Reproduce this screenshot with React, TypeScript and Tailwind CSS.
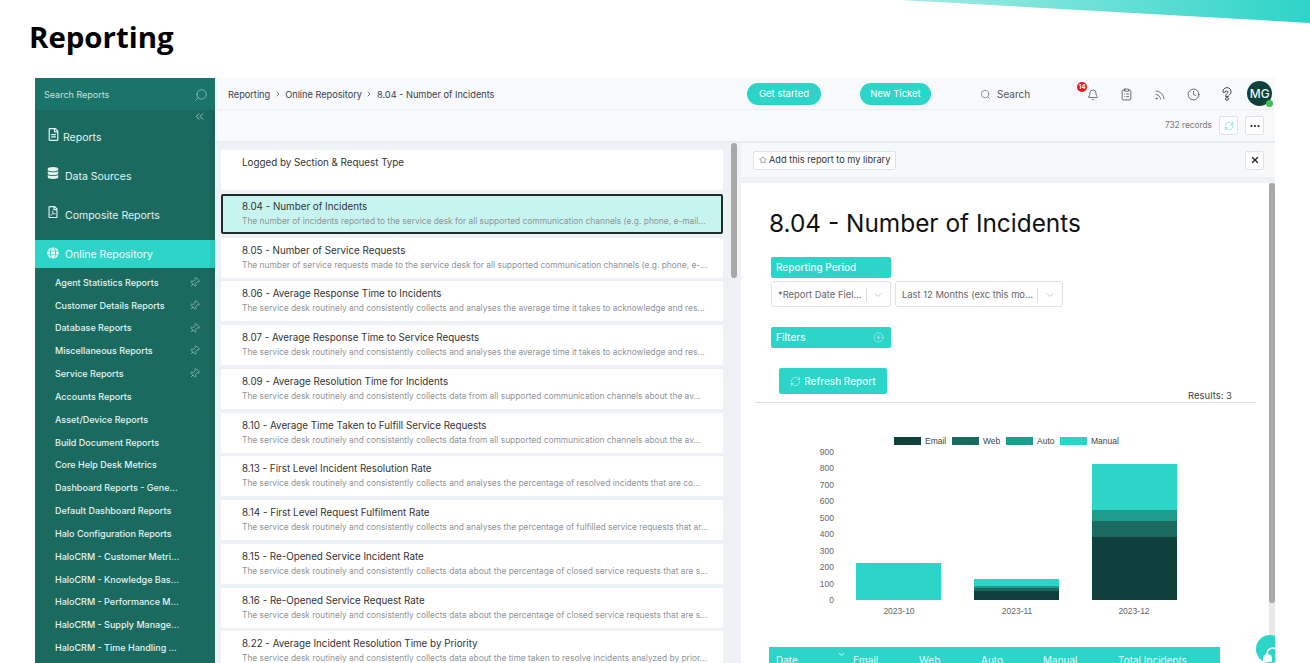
import React from "react";
import { Search, ChevronsLeft, ChevronRight, Pin, Bell, ClipboardList, Rss, Clock, RefreshCw, Ellipsis, X, ChevronDown, CirclePlus, Star } from "lucide-react";
import { FaDatabase, FaGlobe, FaRegFileAlt, FaRegFilePdf } from "react-icons/fa";

const sub: [string, boolean][] = [
  ["Agent Statistics Reports", true],
  ["Customer Details Reports", true],
  ["Database Reports", true],
  ["Miscellaneous Reports", true],
  ["Service Reports", true],
  ["Accounts Reports", false],
  ["Asset/Device Reports", false],
  ["Build Document Reports", false],
  ["Core Help Desk Metrics", false],
  ["Dashboard Reports - Gene...", false],
  ["Default Dashboard Reports", false],
  ["Halo Configuration Reports", false],
  ["HaloCRM - Customer Metri...", false],
  ["HaloCRM - Knowledge Bas...", false],
  ["HaloCRM - Performance M...", false],
  ["HaloCRM - Supply Manage...", false],
  ["HaloCRM - Time Handling ...", false],
];

const rows: [string, string][] = [
  ["8.04 - Number of Incidents", "The number of incidents reported to the service desk for all supported communication channels (e.g. phone, e-mail..."],
  ["8.05 - Number of Service Requests", "The number of service requests made to the service desk for all supported communication channels (e.g. phone, e-..."],
  ["8.06 - Average Response Time to Incidents", "The service desk routinely and consistently collects and analyses the average time it takes to acknowledge and res..."],
  ["8.07 - Average Response Time to Service Requests", "The service desk routinely and consistently collects and analyses the average time it takes to acknowledge and res..."],
  ["8.09 - Average Resolution Time for Incidents", "The service desk routinely and consistently collects data from all supported communication channels about the av..."],
  ["8.10 - Average Time Taken to Fulfill Service Requests", "The service desk routinely and consistently collects data from all supported communication channels about the av..."],
  ["8.13 - First Level Incident Resolution Rate", "The service desk routinely and consistently collects and analyses the percentage of resolved incidents that are co..."],
  ["8.14 - First Level Request Fulfilment Rate", "The service desk routinely and consistently collects and analyses the percentage of fulfilled service requests that ar..."],
  ["8.15 - Re-Opened Service Incident Rate", "The service desk routinely and consistently collects data about the percentage of closed service requests that are s..."],
  ["8.16 - Re-Opened Service Request Rate", "The service desk routinely and consistently collects data about the percentage of closed service requests that are s..."],
  ["8.22 - Average Incident Resolution Time by Priority", "The service desk routinely and consistently collects data about the time taken to resolve incidents analyzed by prior..."],
];

function HelpIcon() {
  return (
    <svg width="10" height="14" viewBox="0 0 11 15" fill="none" stroke="#333" strokeWidth="1">
      <path d="M1 5a4.5 4.5 0 1 1 7 3.7c-.7.5-1 .8-1 1.5h-3c0-1.6.5-2.4 1.6-3.2.7-.5.9-.9.9-1.5a1.4 1.4 0 0 0-2.8 0H1z" />
      <rect x="4" y="11.6" width="3" height="2.6" rx=".6" />
    </svg>
  );
}

function ChatIcon() {
  return (
    <svg width="19" height="16" viewBox="0 0 19 16" fill="none">
      <path d="M5 8a6 6 0 0 1 12 0" stroke="#fff" strokeWidth="1.6" />
      <path d="M1 12.5a4.5 4.5 0 0 1 9 0V16H1z" fill="#fff" />
    </svg>
  );
}

function Chart() {
  const c = { e: "#0f403c", w: "#1a6a60", a: "#209c8f", m: "#2dd4c8" };
  const ox = 769, oy = 432;
  const legend: [number, string, string, number][] = [
    [894, c.e, "Email", 925],
    [952, c.w, "Web", 983],
    [1006, c.a, "Auto", 1037],
    [1060, c.m, "Manual", 1091],
  ];
  const R = ({ x, y1, y2, f }: { x: number; y1: number; y2: number; f: string }) => (
    <rect x={x - ox} y={y1 - oy} width="85" height={y2 - y1} fill={f} />
  );
  return (
    <svg width="452" height="190" viewBox="0 0 452 190" className="block ml-[28px]">
      {legend.map(([x, f, t, tx]) => (
        <g key={t}>
          <rect x={x - ox} y={437 - oy} width="27" height="8" fill={f} />
          <text x={tx - ox} y={444 - oy} fontSize="8.5" fill="#444" fontFamily="Liberation Sans, sans-serif">{t}</text>
        </g>
      ))}
      {[900, 800, 700, 600, 500, 400, 300, 200, 100, 0].map((v, i) => (
        <text key={v} x={834 - ox} y={455 - oy + i * 16.45} fontSize="8.5" fill="#666" textAnchor="end" fontFamily="Liberation Sans, sans-serif">{v}</text>
      ))}
      <R x={856} y1={563} y2={600} f={c.m} />
      <R x={974} y1={579} y2={586} f={c.m} />
      <R x={974} y1={586} y2={588} f={c.a} />
      <R x={974} y1={588} y2={591} f={c.w} />
      <R x={974} y1={591} y2={600} f={c.e} />
      <R x={1092} y1={464} y2={510} f={c.m} />
      <R x={1092} y1={510} y2={521} f={c.a} />
      <R x={1092} y1={521} y2={537} f={c.w} />
      <R x={1092} y1={537} y2={600} f={c.e} />
      {[["2023-10", 899], ["2023-11", 1017], ["2023-12", 1134]].map(([t, x]) => (
        <text key={t as string} x={(x as number) - ox} y={614 - oy} fontSize="8.5" fill="#666" textAnchor="middle" fontFamily="Liberation Sans, sans-serif">{t}</text>
      ))}
    </svg>
  );
}

export default function App() {
  return (
    <div className="relative h-[663px] w-[1310px] overflow-hidden bg-white font-['Inter',sans-serif] text-[#374151]">
      <svg className="absolute right-0 top-0" width="410" height="23" viewBox="0 0 410 23">
        <defs>
          <linearGradient id="wedge" x1="0" x2="1" y1="0" y2="0">
            <stop offset="0" stopColor="#a5ece5" />
            <stop offset="1" stopColor="#2dd4c8" />
          </linearGradient>
        </defs>
        <polygon points="0,0 410,0 410,23" fill="url(#wedge)" />
      </svg>

      <div className="h-[78px] pl-[29px] pt-[15px]">
        <h1 className="font-['Open_Sans',sans-serif] text-[29.4px] font-bold leading-[44px] text-black">Reporting</h1>
      </div>

      <div className="mx-[35px] flex h-[585px] overflow-hidden">
        {/* Sidebar */}
        <aside className="relative flex w-[180px] shrink-0 flex-col bg-[#1a6a60] text-[#e3f3f0]">
          <div className="flex h-[32px] items-center justify-between bg-[#1b7469] pl-[9px] pr-[7px] pt-[1px] text-[9px] text-[#c4e0dc]">
            <span>Search Reports</span>
            <Search size={14} strokeWidth={1} className="-scale-x-100" />
          </div>
          <div className="flex h-[16px] justify-end pr-[9px]">
            <ChevronsLeft size={13} strokeWidth={1.2} />
          </div>
          <div className="flex h-[39px] items-start gap-[3px] pl-[12px] pt-[4px] text-[10.5px]">
            <FaRegFileAlt size={13} className="-mt-[2px]" />
            <span>Reports</span>
          </div>
          <div className="flex h-[39px] items-start gap-[6px] pl-[12px] pt-[4px] text-[10.5px]">
            <FaDatabase size={12} className="-mt-[2px]" />
            <span>Data Sources</span>
          </div>
          <div className="flex h-[36px] items-start gap-[6px] pl-[12px] pt-[4px] text-[10.5px]">
            <FaRegFilePdf size={12} className="-mt-[2px]" />
            <span>Composite Reports</span>
          </div>
          <div className="flex h-[28px] items-center gap-[6px] bg-[#2dd4c8] pl-[12px] pt-[1px] text-[10.5px] text-[#eafffb]">
            <FaGlobe size={12} className="-mt-[4px]" />
            <span>Online Repository</span>
          </div>
          <div className="flex flex-col pt-[3px]">
            {sub.map(([t, pin]) => (
              <div key={t} className="flex h-[22.85px] shrink-0 items-center justify-between pl-[20px] pr-[15px] text-[9px] font-medium">
                <span className="whitespace-nowrap">{t}</span>
                {pin && <Pin size={11} strokeWidth={1} className="rotate-45" />}
              </div>
            ))}
          </div>
          <div className="absolute right-0 top-[32px] h-[370px] w-[5px] bg-black/5" />
        </aside>

        {/* Main */}
        <div className="flex min-w-0 flex-1 flex-col">
          <header className="flex h-[32px] shrink-0 items-center border-b border-[#eceff3] bg-[#f7f9fa] pl-[13px] text-[9.2px]">
            <span className="flex w-[519px] items-center gap-[3.5px] whitespace-nowrap pt-[2px]">
              <span>Reporting</span><ChevronRight size={8} /><span>Online Repository</span><ChevronRight size={8} /><span>8.04 - Number of Incidents</span>
            </span>
            <span className="flex h-[22px] w-[74px] items-center justify-center rounded-full bg-[#2dd4c8] pt-[1px] text-[9.5px] text-white">Get started</span>
            <span className="ml-[39px] flex h-[22px] w-[71px] items-center justify-center rounded-full bg-[#2dd4c8] pt-[1px] text-[9.5px] text-white">New Ticket</span>
            <span className="ml-[49px] flex items-center gap-[6px] pt-[2px] text-[10px] text-[#555]">
              <Search size={11} strokeWidth={1.3} /> Search
            </span>
            <span className="relative ml-[57px] mt-[2px] text-[#333]">
              <Bell size={12} strokeWidth={1.3} />
              <span className="absolute -left-[10px] -top-[7px] flex h-[10px] w-[10px] items-center justify-center rounded-full bg-[#f0101c] text-[6px] font-bold text-white">14</span>
            </span>
            <ClipboardList size={13} strokeWidth={1.3} className="ml-[21px] mt-[2px] text-[#333]" />
            <Rss size={12} strokeWidth={1.3} className="ml-[21px] mt-[2px] text-[#333]" />
            <Clock size={13} strokeWidth={1.3} className="ml-[21px] mt-[2px] text-[#333]" />
            <span className="ml-[22px] mt-[1px] flex"><HelpIcon /></span>
            <span className="relative ml-[15px] flex h-[25px] w-[25px] items-center justify-center rounded-full bg-[#0f403c] text-[12px] font-medium text-[#e5fbf8]">
              MG
              <span className="absolute -bottom-[0.5px] -right-[0.5px] h-[7px] w-[7px] rounded-full bg-[#3fbf4f]" />
            </span>
          </header>

          <div className="flex h-[33px] shrink-0 items-center justify-end gap-[7px] border-b-2 border-[#e8ebef] bg-[#f7f9fa] pr-[11px]">
            <span className="text-[8.3px] text-[#777]">732 records</span>
            <span className="flex h-[19px] w-[19px] items-center justify-center rounded-[2px] border border-[#dfe3e8] bg-white text-[#2dd4c8]">
              <RefreshCw size={10} strokeWidth={1.2} />
            </span>
            <span className="flex h-[19px] w-[19px] items-center justify-center rounded-[2px] border border-[#dfe3e8] bg-white text-[#222]">
              <Ellipsis size={12} strokeWidth={2.4} />
            </span>
          </div>

          <div className="flex min-h-0 flex-1 bg-[#eef1f5]">
            {/* List */}
            <div className="flex w-[516px] shrink-0 flex-col gap-[3.75px] overflow-hidden pl-[6px] pt-[7px]">
              <div className="h-[40px] w-[502px] shrink-0 bg-white pl-[21px] pt-[6px] text-[9.8px] leading-[14px] text-[#333]">Logged by Section &amp; Request Type</div>
              {rows.map(([t, d], i) => (
                <div key={t} className={i === 0 ? "h-[40px] w-[502px] shrink-0 rounded-[2px] border-2 border-[#1f2d2d] bg-[#c8f4ef] pl-[19px] pt-[4px]" : "h-[40px] w-[502px] shrink-0 bg-white pl-[21px] pt-[6px]"}>
                  <div className="whitespace-nowrap text-[9.8px] leading-[14px] text-[#333]">{t}</div>
                  <div className="whitespace-nowrap text-[8.4px] leading-[14px] text-[#8f9599]">{d}</div>
                </div>
              ))}
            </div>
            {/* Scrollbar */}
            <div className="w-[10px] shrink-0">
              <div className="h-[135px] w-[6px] rounded-full bg-[#a8a8a8]" />
            </div>
            {/* Report */}
            <div className="flex min-w-0 flex-1 flex-col">
              <div className="flex h-[34px] shrink-0 items-center justify-between bg-[#f6f8fa] pl-[12px] pr-[11px]">
                <span className="flex h-[19px] items-center gap-[2px] rounded-[2px] border border-[#dfe3e8] bg-white px-[5px] text-[9.2px] text-[#333]">
                  <Star size={8} strokeWidth={1.2} /> Add this report to my library
                </span>
                <span className="flex h-[19px] w-[19px] items-center justify-center rounded-[2px] border border-[#dfe3e8] bg-white text-[#222]">
                  <X size={10} strokeWidth={3} />
                </span>
              </div>
              <div className="mt-[6px] flex min-h-0 flex-1">
                <div className="min-w-0 flex-1 bg-white">
                  <h2 className="ml-[28px] mt-[24px] whitespace-nowrap text-[24.4px] font-normal leading-[32px] text-[#111]">8.04 - Number of Incidents</h2>
                  <div className="ml-[30px] mt-[18px] flex h-[21px] w-[120px] items-center rounded-[2px] bg-[#2dd4c8] pl-[5px] text-[10px] font-medium text-[#e6fffb]">Reporting Period</div>
                  <div className="ml-[30px] mt-[3px] flex gap-[4px]">
                    <div className="flex h-[26px] w-[120px] items-center rounded-[3px] border border-[#dfe3e8] pl-[6px] pt-[2px] text-[9.4px] text-[#666]">
                      <span className="w-[88px] whitespace-nowrap">*Report Date Fiel...</span>
                      <span className="h-[14px] border-l border-[#ddd]" />
                      <ChevronDown size={12} strokeWidth={1} className="ml-[5px] text-[#999]" />
                    </div>
                    <div className="flex h-[26px] w-[168px] items-center rounded-[3px] border border-[#dfe3e8] pl-[6px] pt-[2px] text-[9.4px] text-[#666]">
                      <span className="w-[135px] whitespace-nowrap">Last 12 Months (exc this mo...</span>
                      <span className="h-[14px] border-l border-[#ddd]" />
                      <ChevronDown size={12} strokeWidth={1} className="ml-[6px] text-[#999]" />
                    </div>
                  </div>
                  <div className="ml-[30px] mt-[20px] flex h-[21px] w-[120px] items-center justify-between rounded-[2px] bg-[#2dd4c8] pl-[5px] pr-[7px] text-[10px] font-medium text-[#e6fffb]">
                    Filters <CirclePlus size={11} strokeWidth={1} />
                  </div>
                  <div className="ml-[38px] mt-[20px] flex h-[26px] w-[108px] items-center justify-center gap-[3px] rounded-[2px] bg-[#2dd4c8] text-[10px] font-medium text-[#e6fffb]">
                    <RefreshCw size={11} strokeWidth={1.2} /> Refresh Report
                  </div>
                  <div className="ml-[14px] mr-[13px] flex h-[9px] justify-end border-b border-[#ddd] pr-[24px]">
                    <span className="-mt-[4px] text-[9.5px] leading-[12px] text-[#444]">Results: 3</span>
                  </div>
                  <div className="mt-[29px]"><Chart /></div>
                  <div className="relative ml-[28px] mt-[25px] flex h-[30px] w-[451px] bg-[#2dd4c8] pt-[6px] text-[10px] text-[#e6fffb]">
                    <span className="w-[84px] pl-[7px]">Date</span>
                    <span className="w-[66px]">Email</span>
                    <span className="w-[62px]">Web</span>
                    <span className="w-[62px]">Auto</span>
                    <span className="w-[75px]">Manual</span>
                    <span>Total Incidents</span>
                    <ChevronDown size={9} strokeWidth={2.5} className="absolute left-[68px] top-[3px]" />
                  </div>
                </div>
                <div className="w-[6px] shrink-0 bg-[#e8e8e8]">
                  <div className="h-[420px] w-[6px] rounded-full bg-[#a8a8a8]" />
                </div>
              </div>
            </div>
          </div>
        </div>
      </div>

      <span className="absolute left-[1256px] top-[635px] flex h-[28px] w-[19px] items-center overflow-hidden">
        <span className="flex h-[28px] w-[28px] shrink-0 items-start justify-start rounded-full bg-[#2dd4c8] pl-[6px] pt-[11px]">
          <ChatIcon />
        </span>
      </span>
    </div>
  );
}
